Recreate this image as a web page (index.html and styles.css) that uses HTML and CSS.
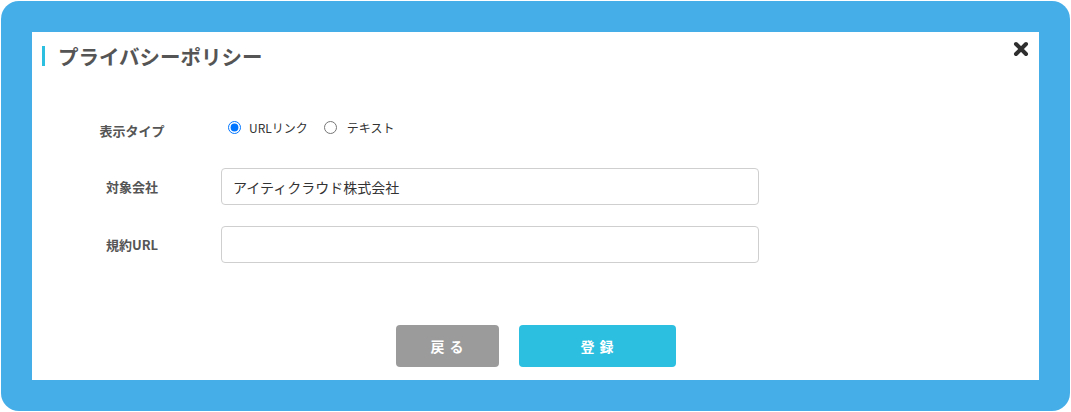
FILE: index.html
```html
<!DOCTYPE html>
<html lang="ja">
<head>
<meta charset="utf-8">
<link rel="stylesheet" href="styles.css">
</head>
<body>
<div class="frame">
  <div class="modal">
    <button class="close" aria-label="閉じる">
      <svg viewBox="0 0 16 16" width="16" height="16"><path d="M3 3 L13 13 M13 3 L3 13" stroke="#2f2f2f" stroke-width="4" stroke-linecap="round"/></svg>
    </button>
    <h1 class="title">プライバシーポリシー</h1>
    <div class="form">
      <div class="row">
        <div class="label">表示タイプ</div>
        <div class="field radios">
          <label class="radio"><input type="radio" name="t" checked><span>URLリンク</span></label>
          <label class="radio"><input type="radio" name="t"><span>テキスト</span></label>
        </div>
      </div>
      <div class="row">
        <div class="label">対象会社</div>
        <div class="field"><input class="text" type="text" value="アイティクラウド株式会社"></div>
      </div>
      <div class="row">
        <div class="label">規約URL</div>
        <div class="field"><input class="text" type="text" value=""></div>
      </div>
    </div>
    <div class="footer">
      <button class="btn back">戻る</button>
      <button class="btn submit">登録</button>
    </div>
  </div>
</div>
</body>
</html>
```
FILE: styles.css
```css
html, body {
  margin: 0;
  padding: 0;
  background: #ffffff;
}
body {
  font-family: "Noto Sans CJK JP", "Noto Sans", sans-serif;
}
.frame {
  margin: 1px 0 0 1px;
  width: 1069px;
  height: 410px;
  box-sizing: border-box;
  padding: 31px;
  background: #45aee8;
  border-radius: 18px;
}
.modal {
  position: relative;
  background: #ffffff;
  height: 348px;
  box-sizing: border-box;
  padding: 14px 0 13px 0;
  display: flex;
  flex-direction: column;
}
.close {
  position: absolute;
  top: 9px;
  right: 10px;
  width: 16px;
  height: 16px;
  padding: 0;
  border: 0;
  background: none;
  display: flex;
}
.title {
  margin: 0 0 0 10px;
  padding-left: 13px;
  border-left: 3px solid #2cbfe0;
  font-size: 20.5px;
  line-height: 20px;
  height: 20px;
  font-weight: 700;
  color: #555555;
  display: flex;
  align-items: center;
}
.form {
  margin-top: 44px;
  display: flex;
  flex-direction: column;
  gap: 21px;
}
.row {
  display: flex;
  align-items: center;
  height: 37px;
}
.label {
  margin-left: 40px;
  width: 120px;
  text-align: center;
  font-size: 13px;
  font-weight: 700;
  color: #555555;
  margin-right: 29px;
}
.row:first-child .label {
  padding-top: 4px;
}
.field {
  width: 538px;
}
.radios {
  display: flex;
  align-items: center;
  gap: 16px;
  padding-bottom: 2px;
}
.radio {
  display: flex;
  align-items: center;
  font-size: 12px;
  color: #333333;
}
.radio input {
  margin: 0 8px 0 7px;
  width: 13px;
  height: 13px;
}
.radios .radio + .radio input {
  margin: 0 10px 0 0;
}
.text {
  width: 538px;
  height: 37px;
  box-sizing: border-box;
  border: 1px solid #cfcfcf;
  border-radius: 4px;
  padding: 0 11px;
  font-family: "Noto Sans CJK JP", "Noto Sans", sans-serif;
  font-size: 14px;
  color: #333333;
  outline: none;
}
.footer {
  margin-top: auto;
  display: flex;
  justify-content: center;
  gap: 20px;
}
.btn {
  height: 42px;
  border: 0;
  border-radius: 4px;
  color: #ffffff;
  font-family: "Noto Sans CJK JP", "Noto Sans", sans-serif;
  font-size: 14px;
  font-weight: 700;
  letter-spacing: 5px;
  text-indent: 5px;
  padding: 0;
}
.back {
  width: 103px;
  background: #9b9b9b;
}
.submit {
  width: 157px;
  background: #2cbfe0;
}
```
